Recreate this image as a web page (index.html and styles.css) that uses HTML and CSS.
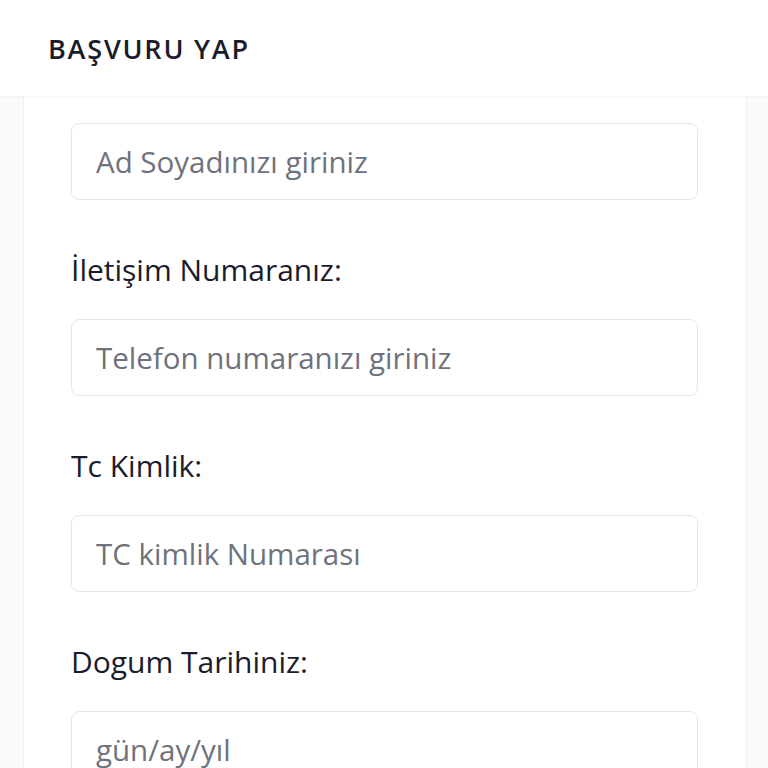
FILE: index.html
```html
<!DOCTYPE html>
<html lang="tr">
<head>
  <meta charset="UTF-8">
  <meta name="viewport" content="width=device-width, initial-scale=1.0">
  <title>Başvuru Yap</title>
  <link rel="stylesheet" href="styles.css">
</head>
<body>
  <header class="topbar">
    <h1 class="title">BAŞVURU YAP</h1>
  </header>

  <main class="page">
    <form class="card">
      <!-- Ad Soyad -->
      <div class="form-group">
        <input type="text" placeholder="Ad Soyadınızı giriniz">
      </div>

      <!-- Telefon -->
      <div class="form-group">
        <label for="phone">İletişim Numaranız:</label>
        <input type="text" id="phone" placeholder="Telefon numaranızı giriniz">
      </div>

      <!-- TC -->
      <div class="form-group">
        <label for="tc">Tc Kimlik:</label>
        <input type="text" id="tc" placeholder="TC kimlik Numarası">
      </div>

      <!-- Dogum tarihi -->
      <div class="form-group">
        <label for="birth">Dogum Tarihiniz:</label>
        <input type="text" id="birth" placeholder="gün/ay/yıl">
      </div>
    </form>
  </main>
</body>
</html>
```

FILE: styles.css
```css
* {
  box-sizing: border-box;
}

body {
  margin: 0;
  padding: 0;
  font-family: "Open Sans", "Noto Sans", sans-serif;
  font-variant-ligatures: none;
  background-color: #fafafa;
  color: #1a1c2b;
}

.topbar {
  height: 96px;
  background-color: #ffffff;
  display: flex;
  align-items: center;
  padding: 0 48px;
  box-shadow: 0 1px 3px rgba(0, 0, 0, 0.05);
  position: relative;
  z-index: 1;
}

.title {
  margin: 0;
  font-size: 27px;
  font-weight: 600;
  letter-spacing: 1.8px;
  color: #1a1c2b;
}

.page {
  padding: 0 21px 0 23px;
}

.card {
  background-color: #ffffff;
  border: 1px solid #f1f1f3;
  border-top: none;
  padding: 27px 48px 40px 47px;
}

.form-group {
  margin-bottom: 50px;
}

label {
  display: block;
  font-size: 30px;
  line-height: 40px;
  margin-bottom: 29px;
  color: #1a1c2b;
}

input[type="text"] {
  display: block;
  width: 100%;
  height: 77px;
  padding: 0 24px;
  border: 1px solid #e6e7eb;
  border-radius: 8px;
  background-color: #ffffff;
  font-family: inherit;
  font-size: 29.5px;
  color: #1a1c2b;
  outline: none;
}

input[type="text"]::placeholder {
  color: #6e727b;
}
```
